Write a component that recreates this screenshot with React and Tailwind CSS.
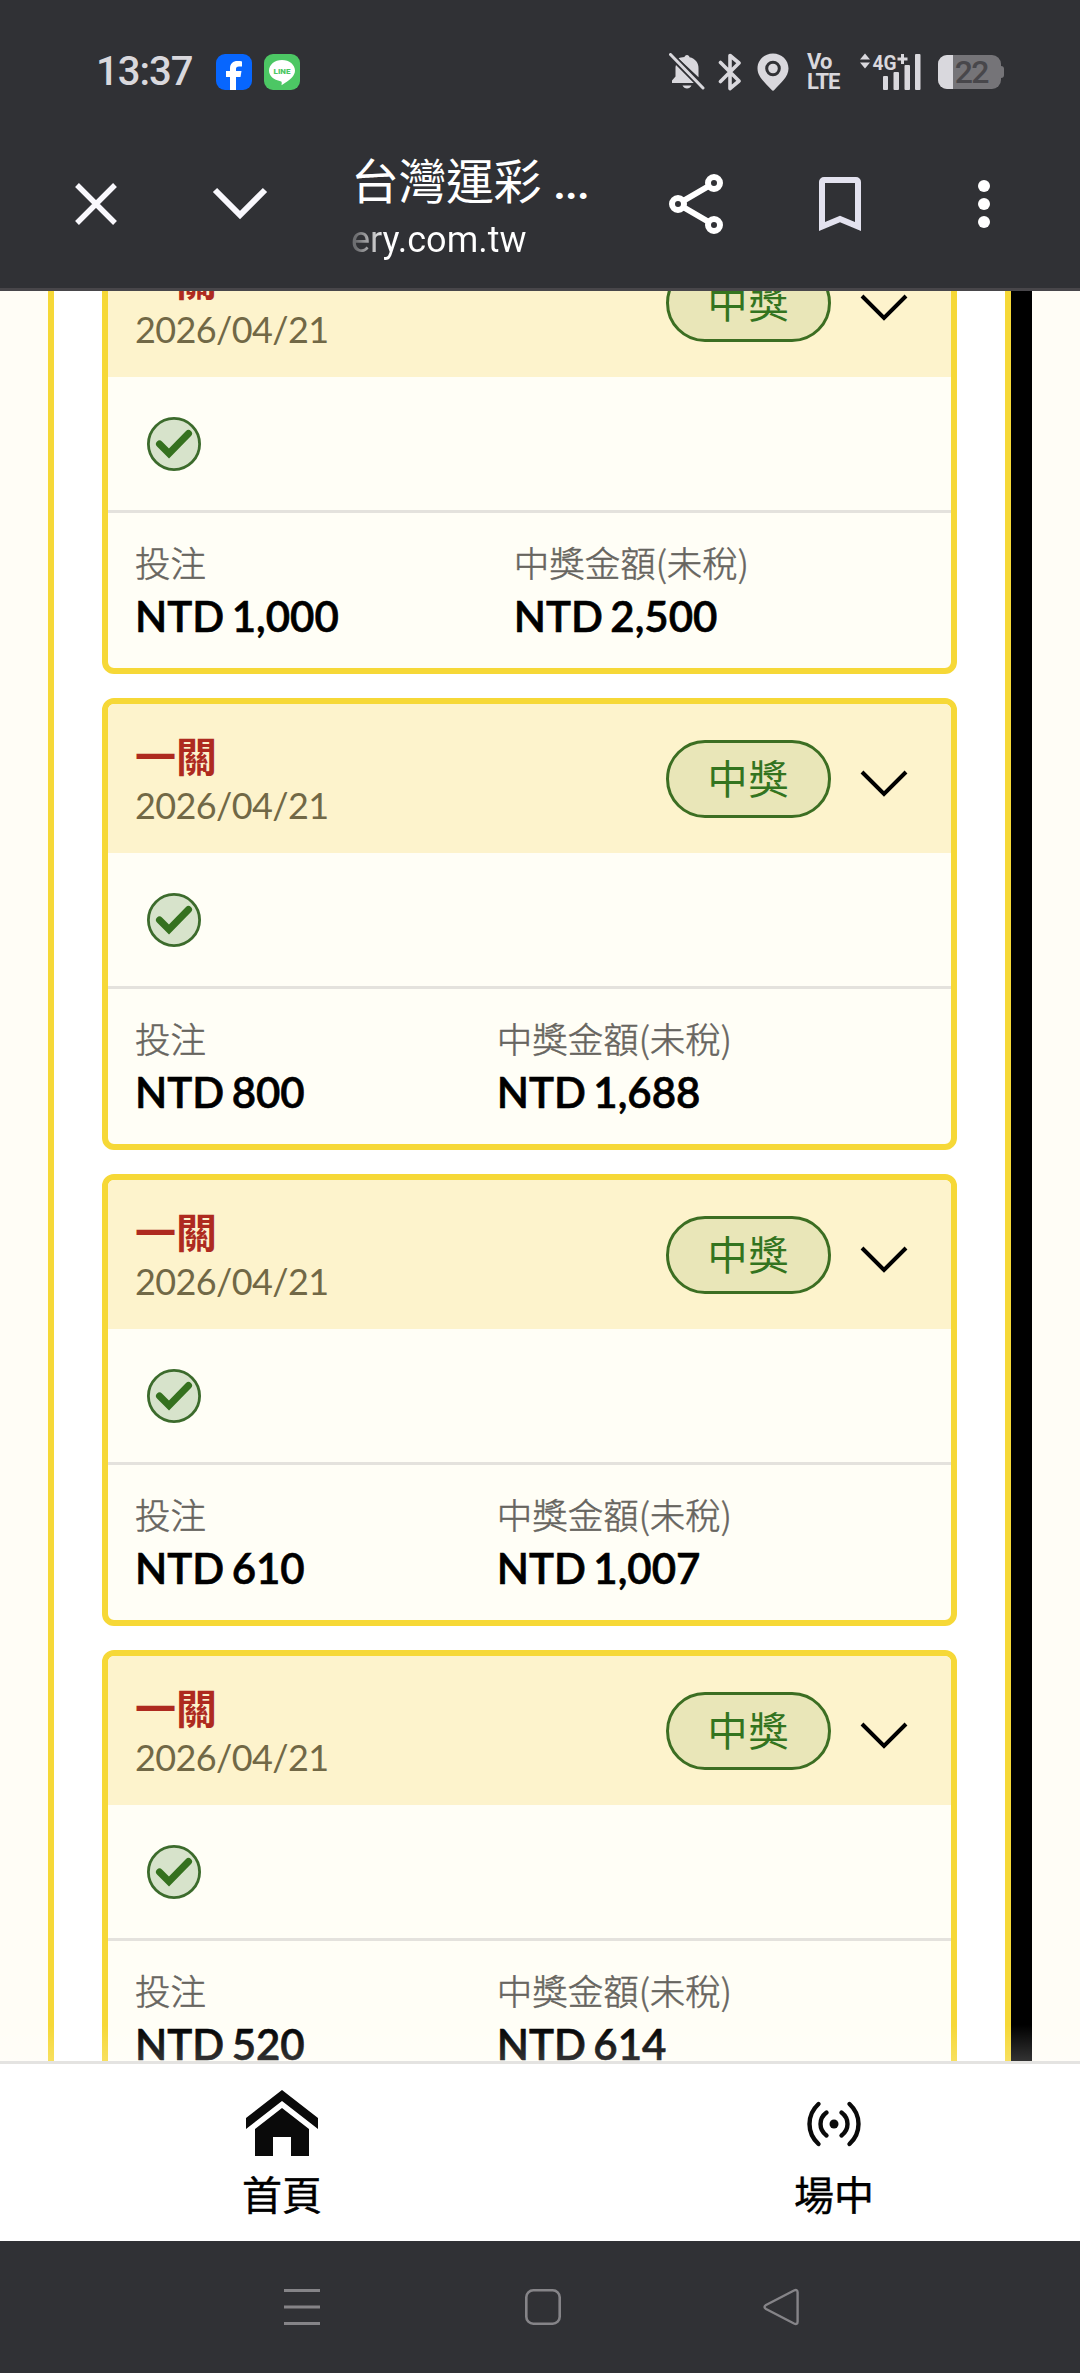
import React from 'react';

const tickets = [
  { id: 1, date: '2026/04/21', bet: 'NTD 1,000', prize: 'NTD 2,500' },
  { id: 2, date: '2026/04/21', bet: 'NTD 800', prize: 'NTD 1,688' },
  { id: 3, date: '2026/04/21', bet: 'NTD 610', prize: 'NTD 1,007' },
  { id: 4, date: '2026/04/21', bet: 'NTD 520', prize: 'NTD 614' },
];

const StatusBar = () => (
  <div className="flex h-[144px] items-center pl-24 pr-[76px] font-['Roboto','Liberation_Sans',sans-serif] text-[#d9d8dd]">
    <span className="w-[120px] text-[40px] font-medium leading-none tracking-[-1px]">13:37</span>

    {/* facebook */}
    <svg className="h-9 w-9" viewBox="0 0 36 36">
      <rect width="36" height="36" rx="9" fill="#0766fe" />
      <path
        d="M14 36V23h-4v-6h4v-2.500C14 9.500 17 7 21.500 7c1.800 0 3.500.2 4.500.4v5h-3c-2.300 0-3 1.100-3 2.700V17h5.500l-1 6H20v13z"
        fill="#fff"
      />
    </svg>

    {/* LINE */}
    <svg className="ml-3 h-9 w-9" viewBox="0 0 36 36">
      <rect width="36" height="36" rx="9" fill="#4cc764" />
      <path d="M18 6c7.300 0 13 4.700 13 10.600 0 5.400-5 9.700-13.500 14.600.5-2.600.3-3.800-1-4C9.800 26.300 5 22 5 16.600 5 10.700 10.700 6 18 6z" fill="#fff" />
      <text x="18" y="20" textAnchor="middle" fontFamily="Roboto" fontSize="8" fontWeight="900" fill="#4cc764">
        LINE
      </text>
    </svg>

    <div className="ml-auto flex items-center">
      {/* muted bell */}
      <svg className="h-[38px] w-[36px]" viewBox="0 0 36 38" fill="#d9d8dd">
        <path d="M18 2c1.500 0 2.200 1 2.500 2.200 6 1.200 9 5.800 9 11v9L9.500 5.500c1.500-.8 3.500-1.200 6-1.400C15.700 3 16.500 2 18 2z" />
        <path d="M7 12l18 18H3v-2.500l3.500-4V14z" />
        <path d="M13.500 32.500h9c-1 2-2.500 3-4.500 3s-3.500-1-4.500-3z" />
        <path d="M1.500 1.500L34 35" stroke="#303135" strokeWidth="6" />
        <path d="M1.500 1.500L34 35" stroke="#d9d8dd" strokeWidth="3" strokeLinecap="round" />
      </svg>
      {/* bluetooth */}
      <svg className="ml-[13px] h-[38px] w-[24px]" viewBox="0 0 24 38" fill="none" stroke="#d9d8dd" strokeWidth="3.600" strokeLinejoin="round" strokeLinecap="round">
        <path d="M2.500 9.500l18.500 18.500-9 7.500V2.500l9 7.500L2.500 28.500" />
      </svg>
      {/* location */}
      <svg className="ml-[15px] h-[38px] w-[32px]" viewBox="0 0 32 38">
        <path
          d="M16 .5c8.600 0 15.500 6.600 15.500 15 0 8.500-8 14.500-14 21.300a2 2 0 0 1-3 0C8.500 30 .5 24 .5 15.500.5 7.100 7.400.5 16 .5z"
          fill="#d9d8dd"
        />
        <circle cx="16" cy="15.500" r="6.300" fill="none" stroke="#303135" strokeWidth="3" />
      </svg>
      <div className="ml-[18px] flex w-[34px] flex-col text-[22px] font-bold leading-[20px] tracking-[-1px]">
        <span>Vo</span>
        <span>LTE</span>
      </div>
      {/* mobile signal */}
      <svg className="ml-[19px] h-[38px] w-[62px]" viewBox="0 0 62 38" fill="#d9d8dd">
        <path d="M5 .5l5 6H0zM5 15.500l5-6H0z" />
        <text x="12.500" y="16.500" fontFamily="Roboto" fontSize="21" fontWeight="700" textLength="24" lengthAdjust="spacingAndGlyphs">
          4G
        </text>
        <path d="M41 1h3v3.500h3.500v3H44V11h-3V7.500h-3.500v-3H41z" />
        <rect x="23" y="23" width="5" height="14" rx="1" />
        <rect x="33.500" y="19" width="5.500" height="18" rx="1" />
        <rect x="44.500" y="12" width="5.500" height="25" rx="1" />
        <rect x="55" y="1" width="5.500" height="36" rx="1" />
      </svg>
      {/* battery */}
      <div className="relative ml-[16px] flex h-[34px] w-[63px] items-center justify-end overflow-hidden rounded-[9px] bg-[#757478] pr-[13px] text-[32px] font-medium leading-[34px] text-[#48474b]">
        <span className="absolute inset-y-0 left-0 w-[15px] bg-[#d9d8dd]" />
        <span className="tracking-[-1.500px]">22</span>
      </div>
      <span className="h-3 w-[3px] rounded-r bg-[#757478]" />
    </div>
  </div>
);

const BrowserBar = () => (
  <div className="flex h-[147px] items-start border-b-[3px] border-[#48464a] font-['Roboto','Noto_Sans_CJK_TC',sans-serif] text-white">
    <svg className="mt-[30px] ml-[66px] h-[60px] w-[60px]" viewBox="0 0 60 60" fill="none" stroke="#f9f8fd" strokeWidth="5.400">
      <path d="M11 11l38 38M49 11L11 49" />
    </svg>
    <svg className="mt-[30px] ml-[84px] h-[60px] w-[60px]" viewBox="0 0 60 60" fill="none" stroke="#f9f8fd" strokeWidth="6">
      <path d="M5 16l25 25 25-25" />
    </svg>
    <div className="ml-[81px] mt-[11px] w-[300px]">
      <div className="flex h-[56px] items-center text-[48px] leading-none tracking-[-0.5px]">
        台灣運彩<span className="ml-[12px] font-medium tracking-[-1.500px]">...</span>
      </div>
      <div className="mt-[5px] w-fit bg-linear-to-r from-white/30 from-3% to-white to-20% bg-clip-text text-[36px] leading-[48px] text-transparent">
        ery.com.tw
      </div>
    </div>
    {/* share */}
    <svg className="mt-[30px] ml-[15px] h-[60px] w-[60px]" viewBox="0 0 60 60" fill="none" stroke="#fff" strokeWidth="6">
      <path d="M48 9L12 30l36 21" />
      <circle cx="48" cy="9" r="6" fill="#303135" />
      <circle cx="12" cy="30" r="6" fill="#303135" />
      <circle cx="48" cy="51" r="6" fill="#303135" />
    </svg>
    {/* bookmark */}
    <svg className="mt-[30px] ml-[84px] h-[60px] w-[60px]" viewBox="0 0 60 60" fill="none" stroke="#e3e2ef" strokeWidth="6">
      <path d="M12 52.500V8a2 2 0 0 1 2-2h32a2 2 0 0 1 2 2v44.500L30 45z" />
    </svg>
    <svg className="mt-[30px] ml-[84px] h-[60px] w-[60px]" viewBox="0 0 60 60" fill="#fff">
      <circle cx="30" cy="12" r="6" />
      <circle cx="30" cy="30" r="6" />
      <circle cx="30" cy="48" r="6" />
    </svg>
  </div>
);

const Amount = ({ label, value }) => (
  <div>
    <div className="font-['Noto_Sans_CJK_TC',sans-serif] text-[35.5px] font-light leading-[52px] text-[#67655f] [-webkit-text-stroke:0.5px_#67655f]">
      {label}
    </div>
    <div className="mt-[2px] text-[42px] font-semibold leading-[52px] text-black [-webkit-text-stroke:0.6px_#000] [word-spacing:-3px]">
      {value}
    </div>
  </div>
);

const TicketCard = ({ ticket }) => (
  <div className="h-[452px] shrink-0 overflow-hidden rounded-[12px] border-[6px] border-[#f6d837] bg-[#fffef6]">
    <div className="flex h-[149px] items-start bg-[#fdf3cc] pl-[27px] pr-[42px]">
      <div className="mt-[29px]">
        <div className="text-[41px] font-bold leading-[48px] text-[#ae2a1f]">一關</div>
        <div className="text-[36px] leading-[48px] tracking-[-0.6px] text-[#716846]">{ticket.date}</div>
      </div>
      <div className="mt-[36px] ml-auto flex h-[78px] w-[165px] items-center justify-center rounded-full border-[3px] border-[#3c6e22] bg-[#e9e6b8] pb-px text-[40px] tracking-[1px] text-[#33741f]">
        中獎
      </div>
      <svg className="mt-[63px] ml-[24px] h-[36px] w-[54px]" viewBox="0 0 54 36" fill="none" stroke="#000" strokeWidth="4">
        <path d="M7 5l22 22L51 5" />
      </svg>
    </div>

    <div className="flex h-[136px] items-center border-b-[3px] border-[#e4e2dd] pl-[39px]">
      <svg className="h-[54px] w-[54px]" viewBox="0 0 54 54">
        <circle cx="27" cy="27" r="25.600" fill="#d7e3cb" stroke="#3c6b2c" strokeWidth="2.800" />
        <path d="M12.500 27l9.500 9.500 19.500-20" fill="none" stroke="#35711f" strokeWidth="7" strokeLinecap="round" />
      </svg>
    </div>

    <div className="grid grid-cols-[auto_auto] pl-[27px] pr-[27px] pt-[23px]">
      <Amount label="投注" value={ticket.bet} />
      <Amount label="中獎金額(未稅)" value={ticket.prize} />
    </div>
  </div>
);

const BottomNav = () => (
  <nav className="flex h-[180px] overflow-hidden border-t-[3px] border-[#e4e3e1] bg-white pl-[6px] text-[40px] leading-none text-black [-webkit-text-stroke:0.4px_#000]">
    <div className="flex w-[552px] shrink-0 flex-col items-center">
      <svg className="mt-[26px] h-[66px] w-[72px]" viewBox="0 0 72 66" fill="#0a0a0a">
        <path d="M36 0l36 28v11L36 11 0 39V28z" />
        <path d="M36 18l27 21v27H45V47H27v19H9V39z" />
      </svg>
      <span className="mt-[19px]">首頁</span>
    </div>
    <div className="flex w-[552px] shrink-0 flex-col items-center">
      <svg className="mt-[26px] h-[66px] w-[72px]" viewBox="0 0 72 66" fill="none" stroke="#0a0a0a" strokeWidth="4.400" strokeLinecap="round">
        <circle cx="36" cy="34" r="4.500" fill="#0a0a0a" stroke="none" />
        <path d="M28.500 22.500c-8 6-8 17 0 23M43.500 22.500c8 6 8 17 0 23" />
        <path d="M20.500 14c-12 11-12 29 0 40M51.500 14c12 11 12 29 0 40" />
      </svg>
      <span className="mt-[19px]">場中</span>
    </div>
  </nav>
);

const SystemNav = () => (
  <div className="flex h-[132px] items-start pt-[45px]">
    <svg className="ml-[281px] h-[42px] w-[42px]" viewBox="0 0 42 42" stroke="#858488" strokeWidth="3">
      <path d="M3 4.500h36M3 21h36M3 37.500h36" />
    </svg>
    <svg className="ml-[199px] h-[42px] w-[42px]" viewBox="0 0 42 42" fill="none" stroke="#858488" strokeWidth="2.600">
      <rect x="4.300" y="4.300" width="33.400" height="33.400" rx="7" />
    </svg>
    <svg className="ml-[197px] h-[42px] w-[42px]" viewBox="0 0 42 42" fill="none" stroke="#858488" strokeWidth="2.400" strokeLinejoin="round">
      <path d="M5 19L33 4.500q3.600-1.500 3.600 2v29q0 3.500-3.600 2L5 23q-3-2 0-4z" />
    </svg>
  </div>
);

const App = () => {
  return (
    <div
      lang="zh-TW"
      className="flex h-[2373px] w-[1080px] flex-col overflow-hidden bg-[#303135] font-['Lato','Noto_Sans_CJK_TC',sans-serif]"
    >
      <StatusBar />
      <BrowserBar />

      <main className="relative flex h-[1770px] overflow-hidden bg-[#fffdf6] pl-12">
        <div className="w-[984px] bg-black pr-[21px]">
          <div className="flow-root h-full border-x-[6px] border-[#f6d837] bg-white px-12">
            <div className="-mt-[69px] flex flex-col gap-6">
              {tickets.map((ticket) => (
                <TicketCard key={ticket.id} ticket={ticket} />
              ))}
            </div>
          </div>
        </div>
        {/* soft shade above the tab bar */}
        <div className="absolute inset-x-0 bottom-0 h-9 bg-linear-to-b from-white/0 to-white/20" />
      </main>

      <BottomNav />
      <SystemNav />
    </div>
  );
};

export default App;
